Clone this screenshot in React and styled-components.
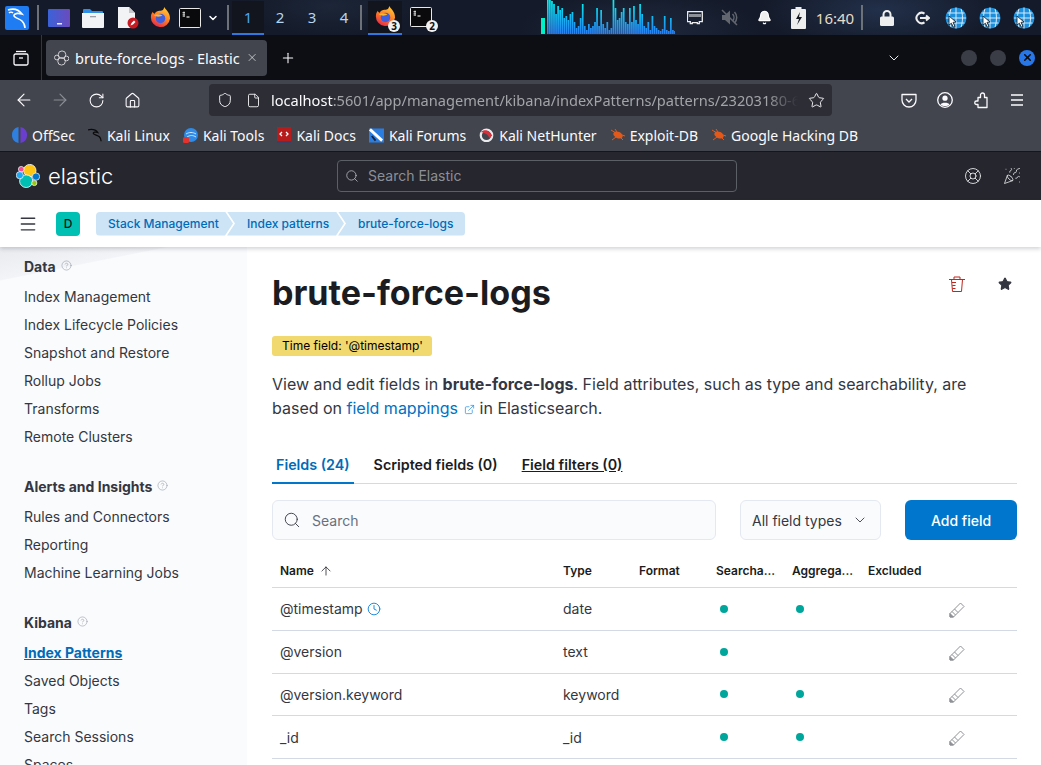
import styled, { createGlobalStyle } from "styled-components";
import {
  ArrowLeft, ArrowRight, RotateCw, Home, Shield, File, Star, Plus, X, ChevronDown,
  Menu, Search, LifeBuoy, PartyPopper, CircleHelp, Clock, ArrowUp, ExternalLink, Bell,
} from "lucide-react";

const GlobalStyle = createGlobalStyle`
  html, body { margin: 0; padding: 0; background: #fff; }
  * { box-sizing: border-box; }
`;

const Page = styled.div`
  width: 1041px;
  height: 765px;
  overflow: hidden;
  display: flex;
  flex-direction: column;
  font-family: Inter, "Liberation Sans", sans-serif;
`;

/* ---------- desktop panel ---------- */
const Panel = styled.div`
  height: 35px;
  flex: none;
  display: flex;
  align-items: center;
  padding-left: 5px;
  background:
    radial-gradient(ellipse 120px 40px at 880px 10px, #22304a 0, transparent 100%),
    radial-gradient(ellipse 120px 40px at 640px 30px, #1f2a3f 0, transparent 100%),
    radial-gradient(ellipse 90px 30px at 330px 6px, #1c2638 0, transparent 100%),
    #141a29;
  font-family: "Noto Sans", sans-serif;
`;

const PanelSlot = styled.div`
  width: ${(p) => p.$w}px;
  margin-left: ${(p) => p.$ml || 0}px;
  height: 35px;
  flex: none;
  display: flex;
  align-items: center;
  justify-content: center;
  position: relative;
  color: #fff;
`;

const PanelSep = styled.div`
  width: 2px;
  height: 25px;
  flex: none;
  margin-left: ${(p) => p.$ml || 0}px;
  background: #6d7178;
`;

const Workspace = styled.div`
  width: 32px;
  height: 34px;
  flex: none;
  display: flex;
  align-items: center;
  justify-content: center;
  font-size: 15px;
  color: ${(p) => (p.$active ? "#4ea3f5" : "#b9d4ee")};
  background: ${(p) => (p.$active ? "#12151d" : "transparent")};
  border-bottom: 2px solid ${(p) => (p.$active ? "#2f78e4" : "transparent")};
`;

const Task = styled.div`
  width: 34px;
  height: 34px;
  flex: none;
  margin-left: ${(p) => p.$ml || 0}px;
  display: flex;
  align-items: center;
  justify-content: center;
  position: relative;
  background: ${(p) => (p.$active ? "#12151d" : "transparent")};
  border-bottom: 2px solid ${(p) => (p.$active ? "#2f78e4" : "transparent")};
`;

const CountBadge = styled.span`
  position: absolute;
  right: ${(p) => p.$r}px;
  bottom: 1px;
  width: 12px;
  height: 12px;
  border-radius: 50%;
  background: #f2f2f2;
  color: #111;
  font-size: 10px;
  font-weight: 700;
  line-height: 12px;
  text-align: center;
`;

const Clockface = styled.div`
  width: 40px;
  margin-left: 9px;
  flex: none;
  font-size: 15px;
  color: #e8dcc6;
  text-align: center;
`;

/* ---------- firefox tab strip ---------- */
const TabStrip = styled.div`
  height: 45px;
  flex: none;
  display: flex;
  align-items: center;
  padding-right: 6px;
  background: #0d0e13;
  color: #fbfbfe;
  font-family: "Noto Sans", sans-serif;
`;

const ViewButton = styled.div`
  width: 42px;
  height: 45px;
  flex: none;
  display: flex;
  align-items: center;
  justify-content: center;
  border-right: 1px solid #34363d;
`;

const BrowserTab = styled.div`
  width: 221px;
  height: 36px;
  margin-left: 4px;
  flex: none;
  display: flex;
  align-items: center;
  padding: 0 9px 0 8px;
  gap: 6px;
  background: #42454e;
  border-radius: 4px;
  font-size: 14.5px;
  white-space: nowrap;
`;

const TabTitle = styled.span`
  flex: 1;
`;

const PlusSlot = styled.div`
  margin-left: 13px;
  display: flex;
  flex: none;
`;

const StripSpring = styled.div`
  flex: 1;
`;

const WindowDot = styled.div`
  width: 16px;
  height: 16px;
  flex: none;
  margin-left: ${(p) => p.$ml}px;
  border-radius: 50%;
  display: flex;
  align-items: center;
  justify-content: center;
  background: ${(p) => (p.$close ? "#2777e8" : "#3a3c46")};
  color: #0d0e13;
`;

/* ---------- firefox toolbar ---------- */
const NavBar = styled.div`
  height: 40px;
  flex: none;
  display: flex;
  align-items: center;
  padding-left: 6px;
  background: #42454e;
  color: #fbfbfe;
`;

const NavButton = styled.div`
  width: 36px;
  flex: none;
  display: flex;
  justify-content: center;
  color: ${(p) => (p.$off ? "#8b8d94" : "#fbfbfe")};
`;

const UrlBox = styled.div`
  width: 623px;
  height: 32px;
  margin-left: 59px;
  flex: none;
  display: flex;
  align-items: center;
  padding: 0 7px 0 8px;
  gap: 10px;
  background: #2c2d35;
  border-radius: 4px;
  font-family: "Noto Sans", sans-serif;
  font-size: 14.6px;
`;

const PageIcon = styled(File)`
  margin-left: 3px;
  flex: none;
`;

const UrlText = styled.div`
  flex: 1;
  overflow: hidden;
  white-space: nowrap;
  color: #a3a4a9;
  mask-image: linear-gradient(to right, #000 94%, transparent 100%);
  b {
    font-weight: 400;
    color: #fbfbfe;
  }
`;

const ToolIcons = styled.div`
  margin-left: 59px;
  display: flex;
  align-items: center;
`;

const BookmarkBar = styled.div`
  height: 32px;
  flex: none;
  display: flex;
  align-items: center;
  gap: 13px;
  padding: 0 0 1px 12px;
  background: #42454e;
  border-bottom: 1px solid #15161b;
  color: #fbfbfe;
  font-family: "Noto Sans", sans-serif;
  font-size: 14px;
`;

const Bookmark = styled.div`
  display: flex;
  align-items: center;
  gap: 5px;
  white-space: nowrap;
`;

/* ---------- kibana header ---------- */
const ElasticBar = styled.div`
  height: 48px;
  flex: none;
  display: flex;
  align-items: center;
  padding-left: 16px;
  background: #25262e;
  color: #fff;
`;

const Brand = styled.div`
  width: 321px;
  flex: none;
  display: flex;
  align-items: center;
  gap: 8px;
  font-size: 22px;
  font-weight: 300;
`;

const GlobalSearch = styled.div`
  width: 400px;
  height: 32px;
  margin-top: -1px;
  flex: none;
  display: flex;
  align-items: center;
  gap: 9px;
  padding-left: 7px;
  border: 1px solid #5d5f67;
  border-radius: 4px;
  background: #25262e;
  color: #8d8f96;
  font-size: 14px;
`;

const HeaderIcons = styled.div`
  margin-left: 227px;
  display: flex;
  align-items: center;
  gap: 21px;
  color: #e4e5e8;
`;

const CrumbBar = styled.div`
  height: 47px;
  flex: none;
  display: flex;
  align-items: center;
  padding-left: 18px;
  background: #fff;
  box-shadow: 0 2px 4px rgba(60, 66, 80, 0.22);
  position: relative;
  z-index: 2;
  color: #343741;
`;

const Avatar = styled.div`
  width: 24px;
  height: 24px;
  margin-left: 18px;
  flex: none;
  border-radius: 4px;
  background: #00bfb3;
  color: #111;
  font-size: 12px;
  font-weight: 500;
  display: flex;
  align-items: center;
  justify-content: center;
`;

const Crumbs = styled.div`
  margin-left: 16px;
  display: flex;
  height: 24px;
`;

const Crumb = styled.div`
  height: 24px;
  display: flex;
  align-items: center;
  width: ${(p) => p.$w}px;
  margin-left: ${(p) => (p.$first ? 0 : -6)}px;
  padding-left: ${(p) => (p.$first ? 12 : 20)}px;
  background: #cce4f5;
  color: #006bb8;
  font-size: 12px;
  font-weight: 500;
  white-space: nowrap;
  border-radius: ${(p) => (p.$first ? "4px 0 0 4px" : p.$last ? "0 4px 4px 0" : "0")};
  clip-path: ${(p) =>
    p.$first
      ? "polygon(0 0, calc(100% - 8px) 0, 100% 50%, calc(100% - 8px) 100%, 0 100%)"
      : p.$last
      ? "polygon(0 0, 100% 0, 100% 100%, 0 100%, 8px 50%)"
      : "polygon(0 0, calc(100% - 8px) 0, 100% 50%, calc(100% - 8px) 100%, 0 100%, 8px 50%)"};
`;

/* ---------- body ---------- */
const Body = styled.div`
  flex: 1;
  min-height: 0;
  display: flex;
  overflow: hidden;
`;

const SideNav = styled.nav`
  width: 247px;
  flex: none;
  padding: 10px 0 0 24px;
  background:
    linear-gradient(168.7deg, #e8eaee 0, #f3f4f7 5.8%, transparent 6%),
    #fafbfd;
  box-shadow: 1px 0 3px rgba(60, 66, 80, 0.14);
  color: #343741;
`;

const NavGroup = styled.div`
  margin-bottom: 27px;
`;

const NavTitle = styled.div`
  height: 18px;
  display: flex;
  align-items: center;
  gap: 5px;
  margin-bottom: 7px;
  font-size: 14px;
  font-weight: 700;
  color: #343741;
  svg {
    color: #8f96a3;
    margin-top: -1px;
  }
`;

const NavLink = styled.div`
  height: 28px;
  display: flex;
  align-items: center;
  font-size: 14px;
  white-space: nowrap;
  span {
    color: ${(p) => (p.$active ? "#006bb8" : "#343741")};
    font-weight: ${(p) => (p.$active ? 700 : 400)};
    text-decoration: ${(p) => (p.$active ? "underline" : "none")};
  }
`;

const Content = styled.main`
  flex: 1;
  min-width: 0;
  padding: 24px 24px 0 25px;
  background: #fff;
`;

const TitleRow = styled.div`
  display: flex;
  justify-content: space-between;
  align-items: flex-start;
  height: 44px;
`;

const PageTitle = styled.h1`
  margin: 0;
  font-size: 34.1px;
  line-height: 44px;
  font-weight: 700;
  color: #1a1c21;
`;

const TitleActions = styled.div`
  display: flex;
  gap: 33px;
  padding: 5px 5px 0 0;
`;

const FavoriteStar = styled(Star)`
  margin-top: 1px;
`;

const TimeBadge = styled.div`
  display: inline-block;
  margin-top: 21px;
  height: 20px;
  padding: 0 9px 0 10px;
  line-height: 20px;
  font-size: 12px;
  font-weight: 400;
  border-radius: 3px;
  background: #f1d86f;
  color: #000;
`;

const Lead = styled.p`
  margin: 16px 0 0;
  width: 720px;
  font-size: 16px;
  line-height: 24px;
  color: #343741;
  b { font-weight: 700; }
  a {
    color: #0071c2;
    font-weight: 400;
  }
  svg {
    color: #1d8be0;
    margin: 0 0 -1px 6px;
  }
`;

const Tabs = styled.div`
  margin-top: 24px;
  display: flex;
  gap: 16px;
  border-bottom: 1px solid #d3dae6;
  height: 40px;
`;

const TabItem = styled.div`
  height: 40px;
  padding: 2px 4px 0;
  display: flex;
  align-items: center;
  font-size: 14.3px;
  font-weight: 600;
  color: ${(p) => (p.$active ? "#006bb8" : "#1a1c21")};
  border-bottom: 2px solid ${(p) => (p.$active ? "#0077cc" : "transparent")};
  span {
    text-decoration: ${(p) => (p.$link ? "underline" : "none")};
  }
`;

const Filters = styled.div`
  margin-top: 16px;
  display: flex;
  height: 40px;
`;

const SearchInput = styled.div`
  width: 444px;
  height: 40px;
  flex: none;
  display: flex;
  align-items: center;
  gap: 11px;
  padding-left: 10px;
  background: #fafbfd;
  border: 1px solid #e4e8f0;
  border-radius: 6px;
  color: #69707d;
  font-size: 14px;
  svg { color: #343741; }
`;

const TypeSelect = styled.div`
  width: 141px;
  height: 40px;
  margin-left: 24px;
  flex: none;
  display: flex;
  align-items: center;
  justify-content: space-between;
  padding: 0 12px 0 11px;
  background: #fafbfd;
  border: 1px solid #e4e8f0;
  border-radius: 6px;
  color: #343741;
  font-size: 14px;
`;

const PrimaryButton = styled.div`
  width: 112px;
  height: 40px;
  margin-left: 24px;
  flex: none;
  display: flex;
  align-items: center;
  justify-content: center;
  background: #0077cc;
  border-radius: 6px;
  color: #fff;
  font-size: 14px;
  font-weight: 500;
`;

const TableRow = styled.div`
  display: grid;
  grid-template-columns: 283px 76px 77px 76px 76px 1fr;
  align-items: center;
  height: ${(p) => p.$h}px;
  padding-top: ${(p) => p.$pt || 0}px;
  border-bottom: 1px solid #d3dae6;
`;

const HeadCell = styled.div`
  padding-left: 8px;
  display: flex;
  align-items: center;
  gap: 5px;
  font-size: 12px;
  font-weight: 600;
  color: #1a1c21;
  white-space: nowrap;
`;

const Cell = styled.div`
  padding-left: 8px;
  display: flex;
  align-items: center;
  gap: 4px;
  font-size: 14px;
  color: #343741;
  white-space: nowrap;
`;

const Dot = styled.span`
  width: 8px;
  height: 8px;
  margin: 0 0 0 4px;
  border-radius: 50%;
  background: #00a69b;
`;

const ActionCell = styled.div`
  display: flex;
  justify-content: flex-end;
  padding-right: 52px;
  padding-top: 2px;
`;

/* ---------- drawn icons ---------- */
const KaliMenu = () => (
  <svg width="24" height="24" viewBox="0 0 24 24">
    <rect width="24" height="24" rx="2" fill="#1f7cf2" />
    <path d="M3 4c6-2 11 0 14 4-3-1-7-1-8 1-1 3 5 3 8 6 2 2 3 4 3 7M8 7c-1-1-3-1-4 0" fill="none" stroke="#fff" strokeWidth="1.6" />
  </svg>
);

const DesktopIcon = () => (
  <svg width="22" height="18" viewBox="0 0 22 18">
    <defs>
      <linearGradient id="deskGrad" x1="0" x2="1">
        <stop offset="0" stopColor="#3b62d8" />
        <stop offset="1" stopColor="#6b4bbd" />
      </linearGradient>
    </defs>
    <rect width="22" height="18" rx="1" fill="url(#deskGrad)" />
    <rect x="9" y="14" width="5" height="1.5" fill="#e8ecff" />
  </svg>
);

const FolderIcon = () => (
  <svg width="22" height="20" viewBox="0 0 22 20">
    <path d="M1 2a1 1 0 0 1 1-1h6l2 2h10a1 1 0 0 1 1 1v3H1z" fill="#2f8de4" />
    <path d="M0 5h22v14a1 1 0 0 1-1 1H1a1 1 0 0 1-1-1z" fill="#f2f3f5" />
    <rect x="8" y="8" width="6" height="1.3" fill="#9aa0a8" />
  </svg>
);

const DocIcon = () => (
  <svg width="22" height="22" viewBox="0 0 22 22">
    <path d="M1 0h11l6 6v15H1z" fill="#f2f3f5" />
    <path d="M12 0l6 6h-6z" fill="#c4c6ca" />
    <circle cx="16" cy="16" r="5.5" fill="#c81a22" />
    <path d="M13.5 18.5l1-2.5 2.5-2.5 1.5 1.5-2.5 2.5z" fill="#fff" />
  </svg>
);

const Firefox = ({ size = 21 }) => (
  <svg width={size} height={size} viewBox="0 0 22 22">
    <defs>
      <linearGradient id="foxGrad" x1="0.7" y1="0" x2="0.2" y2="1">
        <stop offset="0" stopColor="#ffc93a" />
        <stop offset="0.5" stopColor="#ff7a24" />
        <stop offset="1" stopColor="#e4234f" />
      </linearGradient>
    </defs>
    <path d="M15 0c1 3 6 5 6 12a10 10 0 1 1-20-2c0-2 1-4 2-5 0 1 1 2 2 2 1-2 3-3 5-3 2 0 4 0 5-4z" fill="url(#foxGrad)" />
    <circle cx="11" cy="12" r="5" fill="#3f5fe0" />
    <path d="M4 9c3-2 6-2 9 0-2 1-5 2-9 0z" fill="#ffb52e" />
  </svg>
);

const TermIcon = () => (
  <svg width="22" height="20" viewBox="0 0 22 20">
    <rect x="0.5" y="0.5" width="21" height="19" rx="1" fill="#0a0a0c" stroke="#e8e8e8" />
    <path d="M5 3.5v5.500M3.500 4.500h2.500M3.500 6.200h2.500M3.500 8h2.500" stroke="#e8e8e8" strokeWidth="0.8" />
    <path d="M7.500 9h3" stroke="#e8e8e8" strokeWidth="1.2" />
  </svg>
);

const cpuBars = [34, 34, 33, 30, 20, 28, 24, 26, 16, 18, 14, 20, 22, 12, 6, 8, 16, 30, 8, 4, 10, 6, 8, 12, 26, 8, 24, 10, 6, 12, 4, 6, 34, 26, 14, 16, 22, 26, 12, 10, 26, 12, 28, 14, 10, 30, 20, 8, 6, 12, 4, 18, 8, 6, 4, 3, 5, 18, 4, 3, 16, 4, 3];

const CpuGraph = () => (
  <svg width="134" height="35" viewBox="0 0 134 35">
    <defs>
      <linearGradient id="cpuGrad" gradientUnits="userSpaceOnUse" x1="0" y1="0" x2="0" y2="34">
        <stop offset="0" stopColor="#00f4f0" />
        <stop offset="1" stopColor="#2a7df2" />
      </linearGradient>
    </defs>
    <rect x="0" y="18" width="4" height="16" fill="#00f0c8" />
    {cpuBars.map((h, i) => (
      <rect key={i} x={6 + i * 2.05} y={34 - h} width="1.7" height={h} fill="url(#cpuGrad)" />
    ))}
  </svg>
);

const NetIcon = () => (
  <svg width="16" height="14" viewBox="0 0 16 14">
    <path d="M0.7 0.7h14.6v10h-3v2h-2v-1h-5v1h-2v-2h-3z" fill="none" stroke="#eee" strokeWidth="1.3" />
    <path d="M3 3v3M5 3v3M7 3v3M9 3v3M11 3v3M13 3v3" stroke="#eee" strokeWidth="1.1" />
  </svg>
);

const MutedIcon = () => (
  <svg width="18" height="17" viewBox="0 0 18 17">
    <path d="M1 6h3l5-4.500v14L4 11H1z" fill="#62666e" />
    <path d="M11.500 5a5 5 0 0 1 0 7M13.500 3a8 8 0 0 1 0 11" fill="none" stroke="#62666e" strokeWidth="1.500" />
    <path d="M1 1l15 15" stroke="#62666e" strokeWidth="1.500" />
  </svg>
);

const BatteryIcon = () => (
  <svg width="15" height="22" viewBox="0 0 15 22">
    <rect x="4.5" y="0" width="6" height="2" fill="#eee" />
    <rect x="0" y="2" width="15" height="20" rx="1" fill="#eee" />
    <path d="M9 5l-4 7h3l-2 6 5-8H8z" fill="#15191f" />
  </svg>
);

const LockIcon = () => (
  <svg width="14" height="16" viewBox="0 0 14 16">
    <path d="M3.500 7V4.500a3.500 3.500 0 0 1 7 0V7" fill="none" stroke="#eee" strokeWidth="2" />
    <rect y="6.500" width="14" height="9.500" rx="1.500" fill="#eee" />
  </svg>
);

const LogoutIcon = () => (
  <svg width="16" height="14" viewBox="0 0 16 14">
    <path d="M10.5 2.6A5.2 5.2 0 1 0 10.5 11.4" fill="none" stroke="#eee" strokeWidth="2" />
    <path d="M6 7h9M12 4.5l3 2.5-3 2.5" fill="none" stroke="#eee" strokeWidth="2" />
  </svg>
);

const GlobeCursor = () => (
  <svg width="22" height="22" viewBox="0 0 22 22">
    <circle cx="11" cy="11" r="10.5" fill="#1c8fdc" />
    <path d="M1 11h20M2.5 6h17M2.5 16h17M11 .5v21M6 1.8c-2 6-2 12 0 18.4M16 1.8c2 6 2 12 0 18.4" stroke="#e4f4ff" strokeWidth="0.9" fill="none" />
    <path d="M4 9l7 6-3 .4 2 4-1.6.8-2-4L4 18z" fill="#fff" stroke="#111" strokeWidth="0.8" />
  </svg>
);

const ElasticMark = ({ outline }) =>
  outline ? (
    <svg width="16" height="16" viewBox="0 0 16 16" fill="none" stroke="#d4d5d9" strokeWidth="1">
      <circle cx="8.5" cy="4.5" r="4" />
      <circle cx="8" cy="11.5" r="4" />
      <circle cx="3" cy="7.5" r="2.5" />
      <circle cx="13.2" cy="8.5" r="2.5" />
    </svg>
  ) : (
    <svg width="24" height="24" viewBox="0 0 24 24">
      <ellipse cx="13.8" cy="6.6" rx="6.2" ry="6.2" fill="#fec514" stroke="#fff" strokeWidth="0.8" />
      <ellipse cx="10.2" cy="17.2" rx="6.6" ry="6.3" fill="#00bfb3" stroke="#fff" strokeWidth="0.8" />
      <circle cx="5.2" cy="5.2" r="2.8" fill="#f04e98" stroke="#fff" strokeWidth="0.7" />
      <ellipse cx="3.8" cy="11.2" rx="3.6" ry="3.6" fill="#1ba9f5" stroke="#fff" strokeWidth="0.7" />
      <ellipse cx="20" cy="12.6" rx="3.7" ry="3.7" fill="#0077cc" stroke="#fff" strokeWidth="0.7" />
      <circle cx="18.3" cy="19" r="2.6" fill="#93c90e" stroke="#fff" strokeWidth="0.7" />
    </svg>
  );

const OffSecMark = () => (
  <svg width="15" height="16" viewBox="0 0 15 16">
    <path d="M6.5 0C2 1 0 4 0 8s2 7 6.5 8z" fill="#2f7fe0" />
    <path d="M8.5 0c4.500 1 6.500 4 6.500 8s-2 7-6.500 8z" fill="#6a3fd0" />
  </svg>
);

const KaliMark = () => (
  <svg width="14" height="15" viewBox="0 0 16 15">
    <path d="M0 1c5-1 9 0 11 3-3-1-5 0-5 1 0 2 5 2 7 4 1 1 2 3 2 5" fill="none" stroke="#0b0b0d" strokeWidth="1.5" />
  </svg>
);

const ToolsMark = () => (
  <svg width="15" height="15" viewBox="0 0 15 15">
    <circle cx="8" cy="7" r="7" fill="#2f8be6" />
    <path d="M3 6c3-2 7-2 10 0M4 9c3-2 6-2 9 0" stroke="#cfe6ff" fill="none" />
    <rect x="0" y="9" width="6" height="6" rx="1.5" fill="#e5322d" />
  </svg>
);

const DocsMark = () => (
  <svg width="14" height="16" viewBox="0 0 14 16">
    <rect width="14" height="16" fill="#b71c1c" />
    <rect y="14" width="14" height="2" fill="#3a3f66" />
    <path d="M5 5L3 7l2 2M9 5l2 2-2 2" stroke="#fff" fill="none" strokeWidth="1.3" />
  </svg>
);

const ForumsMark = () => (
  <svg width="15" height="15" viewBox="0 0 16 15">
    <rect width="16" height="15" fill="#2a7de1" />
    <path d="M1 1l13 12" stroke="#fff" strokeWidth="3" />
    <path d="M3 8l4 5" stroke="#14233f" strokeWidth="2" />
  </svg>
);

const HunterMark = () => (
  <svg width="15" height="14" viewBox="0 0 17 15">
    <circle cx="8.5" cy="8" r="6.500" fill="none" stroke="#e8eaee" strokeWidth="2.5" />
    <path d="M2 4c4-3 9-3 13 4l-3 3C10 6 6 5 2 4z" fill="#d8303a" />
  </svg>
);

const BugMark = () => (
  <svg width="15" height="12" viewBox="0 0 15 12">
    <ellipse cx="8" cy="6" rx="5" ry="3.200" fill="#e2591a" transform="rotate(25 8 6)" />
    <path d="M1 1l5 3M5 0l2 3M2 11l4-3M13 11l-3-3M15 7l-3-1" stroke="#e2591a" strokeWidth="1" />
  </svg>
);

const TrashIcon = () => (
  <svg width="16" height="16" viewBox="0 0 16 16" fill="none" stroke="#bd271e" strokeWidth="1">
    <path d="M0 3.500h16M5 3.500V1h6v2.500M2.500 3.500L3.500 15.500h9l1-12M3 6.500h4M3.300 9.500h3.200M3.500 12.500h3" />
  </svg>
);

const PencilIcon = () => (
  <svg width="16" height="16" viewBox="0 0 16 16" fill="none" stroke="#8f9196" strokeWidth="1">
    <path d="M1 11.500L11.500 1l3.500 3.500L4.500 15H1zM3 9.500l3.500 3.500M5.500 7l3.500 3.500" />
    <path d="M1 11.500l3.500 3.500H1z" fill="#8f9196" />
  </svg>
);

const PocketIcon = () => (
  <svg width="16" height="15" viewBox="0 0 16 15" fill="none" stroke="#fbfbfe" strokeWidth="1.300">
    <path d="M1 1.500h14V7a7 7 0 0 1-14 0z" strokeLinejoin="round" />
    <path d="M5 6l3 3 3-3" />
  </svg>
);

const FirefoxViewIcon = () => (
  <svg width="16" height="16" viewBox="0 0 16 16" fill="none" stroke="#fbfbfe" strokeWidth="1.300">
    <path d="M3 1.500h10" />
    <rect x="1" y="4" width="14" height="11" rx="1.500" />
    <path d="M6 8h4" />
  </svg>
);

const MenuLines = () => (
  <svg width="16" height="14" viewBox="0 0 16 14" stroke="#fbfbfe" strokeWidth="1.300">
    <path d="M2 2h12M2 7h12M2 12h12" />
  </svg>
);

const AccountIcon = () => (
  <svg width="16" height="16" viewBox="0 0 16 16">
    <circle cx="8" cy="8" r="7.300" fill="none" stroke="#fbfbfe" strokeWidth="1.300" />
    <circle cx="8" cy="6.200" r="2.600" fill="#fbfbfe" />
    <path d="M3.500 12.500c1-2.500 8-2.500 9 0-2 2-7 2-9 0z" fill="#fbfbfe" />
  </svg>
);

const ExtensionIcon = () => (
  <svg width="16" height="17" viewBox="0 0 16 17" fill="none" stroke="#fbfbfe" strokeWidth="1.300" strokeLinejoin="round">
    <path d="M5 5.500h2.500V3a2 2 0 0 1 4 0v2.500H14v10H5v-3H3.500a1.750 1.750 0 0 1 0-3.500H5z" />
  </svg>
);

const bookmarks = [
  ["OffSec", OffSecMark],
  ["Kali Linux", KaliMark],
  ["Kali Tools", ToolsMark],
  ["Kali Docs", DocsMark],
  ["Kali Forums", ForumsMark],
  ["Kali NetHunter", HunterMark],
  ["Exploit-DB", BugMark],
  ["Google Hacking DB", BugMark],
];

const navGroups = [
  { title: "Data", links: ["Index Management", "Index Lifecycle Policies", "Snapshot and Restore", "Rollup Jobs", "Transforms", "Remote Clusters"] },
  { title: "Alerts and Insights", links: ["Rules and Connectors", "Reporting", "Machine Learning Jobs"] },
  { title: "Kibana", links: ["Index Patterns", "Saved Objects", "Tags", "Search Sessions", "Spaces"] },
];

const fields = [
  { name: "@timestamp", type: "date", search: true, agg: true, clock: true },
  { name: "@version", type: "text", search: true, agg: false },
  { name: "@version.keyword", type: "keyword", search: true, agg: true },
  { name: "_id", type: "_id", search: true, agg: true },
];

export default function App() {
  return (
    <Page>
      <GlobalStyle />
      <Panel>
        <KaliMenu />
        <PanelSep $ml={8} />
        <PanelSlot $w={22} $ml={9}><DesktopIcon /></PanelSlot>
        <PanelSlot $w={22} $ml={12}><FolderIcon /></PanelSlot>
        <PanelSlot $w={22} $ml={13}><DocIcon /></PanelSlot>
        <PanelSlot $w={21} $ml={11}><Firefox /></PanelSlot>
        <PanelSlot $w={22} $ml={8}><TermIcon /></PanelSlot>
        <PanelSlot $w={12} $ml={6}><ChevronDown size={12} strokeWidth={3} /></PanelSlot>
        <PanelSep $ml={8} />
        <PanelSlot $w={3} />
        <Workspace $active>1</Workspace>
        <Workspace>2</Workspace>
        <Workspace>3</Workspace>
        <Workspace>4</Workspace>
        <PanelSep />
        <Task $active $ml={6}>
          <Firefox />
          <CountBadge $r={2}>3</CountBadge>
        </Task>
        <Task $ml={2}>
          <TermIcon />
          <CountBadge $r={0}>2</CountBadge>
        </Task>
        <PanelSlot $w={134} $ml={103}><CpuGraph /></PanelSlot>
        <PanelSlot $w={16} $ml={12}><NetIcon /></PanelSlot>
        <PanelSlot $w={18} $ml={18}><MutedIcon /></PanelSlot>
        <PanelSlot $w={16} $ml={17}><Bell size={15} fill="#eee" /></PanelSlot>
        <PanelSlot $w={15} $ml={19}><BatteryIcon /></PanelSlot>
        <Clockface>16:40</Clockface>
        <PanelSep $ml={6} />
        <PanelSlot $w={14} $ml={17}><LockIcon /></PanelSlot>
        <PanelSlot $w={16} $ml={20}><LogoutIcon /></PanelSlot>
        <PanelSlot $w={22} $ml={15}><GlobeCursor /></PanelSlot>
        <PanelSlot $w={22} $ml={12}><GlobeCursor /></PanelSlot>
        <PanelSlot $w={22} $ml={12}><GlobeCursor /></PanelSlot>
      </Panel>

      <TabStrip>
        <ViewButton><FirefoxViewIcon /></ViewButton>
        <BrowserTab>
          <ElasticMark outline />
          <TabTitle>brute-force-logs - Elastic</TabTitle>
          <X size={13} strokeWidth={1.3} />
        </BrowserTab>
        <PlusSlot><Plus size={16} strokeWidth={1.6} /></PlusSlot>
        <StripSpring />
        <ChevronDown size={16} strokeWidth={1.4} />
        <WindowDot $ml={59} />
        <WindowDot $ml={13} />
        <WindowDot $ml={13} $close><X size={11} strokeWidth={3.500} /></WindowDot>
      </TabStrip>

      <NavBar>
        <NavButton><ArrowLeft size={20} strokeWidth={1.400} /></NavButton>
        <NavButton $off><ArrowRight size={20} strokeWidth={1.400} /></NavButton>
        <NavButton><RotateCw size={17} strokeWidth={1.500} /></NavButton>
        <NavButton><Home size={17} strokeWidth={1.500} /></NavButton>
        <UrlBox>
          <Shield size={16} strokeWidth={1.400} color="#fbfbfe" />
          <PageIcon size={15} strokeWidth={1.400} color="#fbfbfe" />
          <UrlText>
            <b>localhost</b>:5601/app/management/kibana/indexPatterns/patterns/23203180-6a4b-11ec-9f1e-0d7c3a
          </UrlText>
          <Star size={17} strokeWidth={1.300} color="#fbfbfe" />
        </UrlBox>
        <ToolIcons>
          <NavButton><PocketIcon /></NavButton>
          <NavButton><AccountIcon /></NavButton>
          <NavButton><ExtensionIcon /></NavButton>
          <NavButton><MenuLines /></NavButton>
        </ToolIcons>
      </NavBar>

      <BookmarkBar>
        {bookmarks.map(([label, Mark]) => (
          <Bookmark key={label}>
            <Mark />
            {label}
          </Bookmark>
        ))}
      </BookmarkBar>

      <ElasticBar>
        <Brand>
          <ElasticMark />
          elastic
        </Brand>
        <GlobalSearch>
          <Search size={14} strokeWidth={1.300} color="#c4c5c9" />
          Search Elastic
        </GlobalSearch>
        <HeaderIcons>
          <LifeBuoy size={18} strokeWidth={1.200} />
          <PartyPopper size={18} strokeWidth={1.100} />
        </HeaderIcons>
      </ElasticBar>

      <CrumbBar>
        <Menu size={20} strokeWidth={1.700} />
        <Avatar>D</Avatar>
        <Crumbs>
          <Crumb $first $w={137}>Stack Management</Crumb>
          <Crumb $w={117}>Index patterns</Crumb>
          <Crumb $last $w={127}>brute-force-logs</Crumb>
        </Crumbs>
      </CrumbBar>

      <Body>
        <SideNav>
          {navGroups.map((group) => (
            <NavGroup key={group.title}>
              <NavTitle>
                {group.title}
                <CircleHelp size={11} strokeWidth={1.200} />
              </NavTitle>
              {group.links.map((link) => (
                <NavLink key={link} $active={link === "Index Patterns"}>
                  <span>{link}</span>
                </NavLink>
              ))}
            </NavGroup>
          ))}
        </SideNav>

        <Content>
          <TitleRow>
            <PageTitle>brute-force-logs</PageTitle>
            <TitleActions>
              <TrashIcon />
              <FavoriteStar size={14} fill="#343741" color="#343741" />
            </TitleActions>
          </TitleRow>
          <TimeBadge>Time field: '@timestamp'</TimeBadge>
          <Lead>
            View and edit fields in <b>brute-force-logs</b>. Field attributes, such as type and searchability, are
            based on <a>field mappings</a>
            <ExternalLink size={11} strokeWidth={1.500} /> in Elasticsearch.
          </Lead>
          <Tabs>
            <TabItem $active>Fields (24)</TabItem>
            <TabItem>Scripted fields (0)</TabItem>
            <TabItem $link><span>Field filters (0)</span></TabItem>
          </Tabs>
          <Filters>
            <SearchInput>
              <Search size={18} strokeWidth={1.200} />
              Search
            </SearchInput>
            <TypeSelect>
              All field types
              <ChevronDown size={16} strokeWidth={1.300} />
            </TypeSelect>
            <PrimaryButton>Add field</PrimaryButton>
          </Filters>
          <TableRow $h={48} $pt={14}>
            <HeadCell>Name <ArrowUp size={14} strokeWidth={1.300} /></HeadCell>
            <HeadCell>Type</HeadCell>
            <HeadCell>Format</HeadCell>
            <HeadCell>Searcha...</HeadCell>
            <HeadCell>Aggrega...</HeadCell>
            <HeadCell>Excluded</HeadCell>
          </TableRow>
          {fields.map((field) => (
            <TableRow key={field.name} $h={42.75}>
              <Cell>
                {field.name}
                {field.clock && <Clock size={14} strokeWidth={1.700} color="#1d8be0" />}
              </Cell>
              <Cell>{field.type}</Cell>
              <Cell />
              <Cell>{field.search && <Dot />}</Cell>
              <Cell>{field.agg && <Dot />}</Cell>
              <ActionCell><PencilIcon /></ActionCell>
            </TableRow>
          ))}
        </Content>
      </Body>
    </Page>
  );
}
